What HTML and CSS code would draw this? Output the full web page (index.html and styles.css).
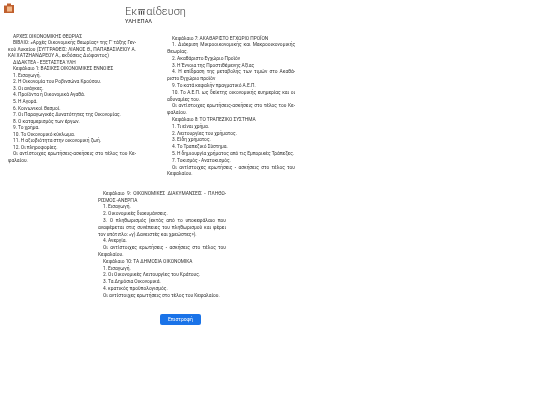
FILE: index.html
```
<!DOCTYPE html>
<html lang="el">
<head>
<meta charset="utf-8">
<title>Εκπαίδευση</title>
<link rel="stylesheet" href="styles.css">
</head>
<body>
<header class="top">
  <svg class="logo" viewBox="0 0 10 10" aria-hidden="true"><path d="M0 2.5 L3 2.5 L3 0.5 L7 0.5 L7 2 L10 2 L10 10 L0 10 Z" fill="#c0602e"/><rect x="3" y="3.5" width="5" height="5" fill="#f3b98a"/></svg>
  <div class="brand">
    <h1 class="title">Εκ<svg class="temple" viewBox="0 0 10 8" aria-hidden="true"><path d="M0 0H10V1.6H0Z M1 2.4H2.6V8H1Z M4.2 2.4H5.8V8H4.2Z M7.4 2.4H9V8H7.4Z" fill="#444"/></svg>αίδευση</h1>
    <p class="sub">ΥΛΗ ΕΠΑΛ</p>
  </div>
</header>
<main>
  <div class="columns">
    <section class="col col-left">
      <p>ΑΡΧΕΣ ΟΙΚΟΝΟΜΙΚΗΣ ΘΕΩΡΙΑΣ</p>
      <p>ΒΙΒΛΙΟ: «Αρχές Οικονομικής Θεωρίας» της Γ' τάξης Γεν&shy;κού Λυκείου (ΣΥΓΓΡΑΦΕΙΣ: ΛΙΑΝΟΣ Θ., ΠΑΠΑΒΑΣΙΛΕΙΟΥ Α. ΚΑΙ ΧΑΤΖΗΑΝΔΡΕΟΥ Α., εκδόσεις Διόφαντος)</p>
      <p>ΔΙΔΑΚΤΕΑ - ΕΞΕΤΑΣΤΕΑ ΥΛΗ</p>
      <p>Κεφάλαιο 1: ΒΑΣΙΚΕΣ ΟΙΚΟΝΟΜΙΚΕΣ ΕΝΝΟΙΕΣ</p>
      <p>1. Εισαγωγή.</p>
      <p>2. Η Οικονομία του Ροβινσώνα Κρούσου.</p>
      <p>3. Οι ανάγκες.</p>
      <p>4. Προϊόντα ή Οικονομικά Αγαθά.</p>
      <p>5. Η Αγορά.</p>
      <p>6. Κοινωνικοί Θεσμοί.</p>
      <p>7. Οι Παραγωγικές Δυνατότητες της Οικονομίας.</p>
      <p>8. Ο καταμερισμός των έργων.</p>
      <p>9. Το χρήμα.</p>
      <p>10. Το Οικονομικό κύκλωμα.</p>
      <p>11. Η αξιοβιότητα στην οικονομική ζωή.</p>
      <p>12. Οι πληροφορίες.</p>
      <p>Οι αντίστοιχες ερωτήσεις-ασκήσεις στο τέλος του Κε&shy;φαλαίου.</p>
    </section>
    <section class="col col-right">
      <p>Κεφάλαιο 7: ΑΚΑΘΑΡΙΣΤΟ ΕΓΧΩΡΙΟ ΠΡΟΪΟΝ</p>
      <p>1. Διάκριση Μικροοικονομικής και Μακροοικονομικής Θεωρίας.</p>
      <p>2. Ακαθάριστο Εγχώριο Προϊόν</p>
      <p>3. Η Έννοια της Προστιθέμενης Αξίας</p>
      <p>4. Η επίδραση της μεταβολής των τιμών στο Ακαθά&shy;ριστο Εγχώριο προϊόν</p>
      <p>9. Το κατά κεφαλήν πραγματικό Α.Ε.Π.</p>
      <p>10. Το Α.Ε.Π. ως δείκτης οικονομικής ευημερίας και οι αδυναμίες του.</p>
      <p>Οι αντίστοιχες ερωτήσεις-ασκήσεις στο τέλος του Κε&shy;φαλαίου.</p>
      <p>Κεφάλαιο 8: ΤΟ ΤΡΑΠΕΖΙΚΟ ΣΥΣΤΗΜΑ</p>
      <p>1. Τι είναι χρήμα.</p>
      <p>2. Λειτουργίες του χρήματος.</p>
      <p>3. Είδη χρήματος.</p>
      <p>4. Το Τραπεζικό Σύστημα.</p>
      <p>5. Η δημιουργία χρήματος από τις Εμπορικές Τράπεζες.</p>
      <p>7. Τοκισμός - Ανατοκισμός.</p>
      <p>Οι αντίστοιχες ερωτήσεις - ασκήσεις στο τέλος του Κεφαλαίου.</p>
    </section>
  </div>
  <section class="col col-center">
    <p>Κεφάλαιο 9: ΟΙΚΟΝΟΜΙΚΕΣ ΔΙΑΚΥΜΑΝΣΕΙΣ - ΠΛΗΘΩ&shy;ΡΙΣΜΟΣ -ΑΝΕΡΓΙΑ</p>
    <p>1. Εισαγωγή.</p>
    <p>2. Οικονομικές διακυμάνσεις.</p>
    <p>3. Ο πληθωρισμός (εκτός από το υποκεφάλαιο που αναφέρεται στις συνέπειες του πληθωρισμού και φέρει τον υπότιτλο: «γ) Δανειστές και χρεώστες»).</p>
    <p>4. Ανεργία.</p>
    <p>Οι αντίστοιχες ερωτήσεις - ασκήσεις στο τέλος του Κεφαλαίου.</p>
    <p>Κεφάλαιο 10: ΤΑ ΔΗΜΟΣΙΑ ΟΙΚΟΝΟΜΙΚΑ</p>
    <p>1. Εισαγωγή.</p>
    <p>2. Οι Οικονομικές Λειτουργίες του Κράτους.</p>
    <p>3. Τα Δημόσια Οικονομικά.</p>
    <p>4. κρατικός προϋπολογισμός.</p>
    <p>Οι αντίστοιχες ερωτήσεις στο τέλος του Κεφαλαίου.</p>
  </section>
  <div class="actions"><a class="back" href="#">Επιστροφή</a></div>
</main>
</body>
</html>
```
FILE: styles.css
```
* { box-sizing: border-box; }
html, body { margin: 0; background: #fff; }
body { font-family: Roboto, "Noto Sans", sans-serif; color: #333; height: 405px; overflow: hidden; filter: blur(.3px); }
.top { display: flex; padding: 3px 0 0 4px; height: 33px; }
.logo { width: 10px; height: 10px; flex: none; }
.brand { margin-left: 111px; }
.title { margin: 0; padding-top: 2px; font-size: 11px; font-weight: 300; line-height: 13px; color: #444; }
.temple { width: 7px; height: 6px; margin: 0 1px; }
.sub { margin: 0; font-size: 5.7px; line-height: 6px; color: #222; }
.columns { display: flex; align-items: flex-start; padding-left: 8px; gap: 31px; }
.col { width: 128px; font-size: 4.85px; line-height: 6.79px; word-spacing: -.12px; text-align: justify; hyphens: manual; }
.col p { margin: 0; text-indent: 5px; }
.col-left { line-height: 6.54px; padding-top: .5px; }
.col-right { padding-top: 2.5px; }
.col-center { margin: 12.5px 0 0 98px; }
.actions { padding: 14.5px 0 0 160px; }
.back { display: block; width: 41px; height: 11px; border-radius: 2px; background: #1a73e8; color: #fff; font-size: 5px; line-height: 11px; text-align: center; text-decoration: none; }
```
